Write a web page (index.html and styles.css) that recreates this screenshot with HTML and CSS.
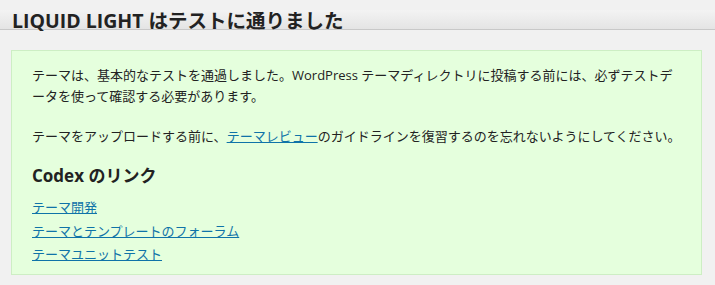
FILE: index.html
```html
<!DOCTYPE html>
<html lang="ja">
<head>
    <meta charset="UTF-8">
    <title>LIQUID LIGHT はテストに通りました</title>
    <link rel="stylesheet" href="styles.css">
</head>
<body>

<h2 class="title-bar">LIQUID LIGHT はテストに通りました</h2>

<div class="notice">
    <p>テーマは、基本的なテストを通過しました。WordPress テーマディレクトリに投稿する前には、必ずテストデータを使って確認する必要があります。</p>
    <p>テーマをアップロードする前に、<a href="#">テーマレビュー</a>のガイドラインを復習するのを忘れないようにしてください。</p>
    <h3>Codex のリンク</h3>
    <ul class="links">
        <li><a href="#">テーマ開発</a></li>
        <li><a href="#">テーマとテンプレートのフォーラム</a></li>
        <li><a href="#">テーマユニットテスト</a></li>
    </ul>
</div>

</body>
</html>
```

FILE: styles.css
```css
* {
    margin: 0;
    padding: 0;
    box-sizing: border-box;
}

body {
    font-family: 'Open Sans', 'Noto Sans CJK JP', sans-serif;
    background-color: #f1f1f1;
    color: #222;
    font-size: 13px;
    padding-top: 10px;
}

/* Title bar */
.title-bar {
    height: 20px;
    padding-left: 12px;
    font-size: 19.5px;
    line-height: 21px;
    font-weight: bold;
    color: #222;
    background: linear-gradient(#f3f3f3, #e4e4e4);
    border-bottom: 1px solid #c8c8c8;
    white-space: nowrap;
}

/* Result box */
.notice {
    margin: 20px 13px 0 11px;
    padding: 14px 20px 8px 20px;
    background-color: #e5ffdd;
    border: 1px solid #cdeec4;
    height: 225px;
}

.notice p {
    line-height: 21px;
    margin-bottom: 19px;
}

.notice h3 {
    font-size: 17px;
    font-weight: bold;
    line-height: 24px;
    margin-top: -2px;
    margin-bottom: 8px;
}

a {
    color: #0f73a8;
}

.links {
    list-style: none;
}

.links li {
    line-height: 23.5px;
}
```
